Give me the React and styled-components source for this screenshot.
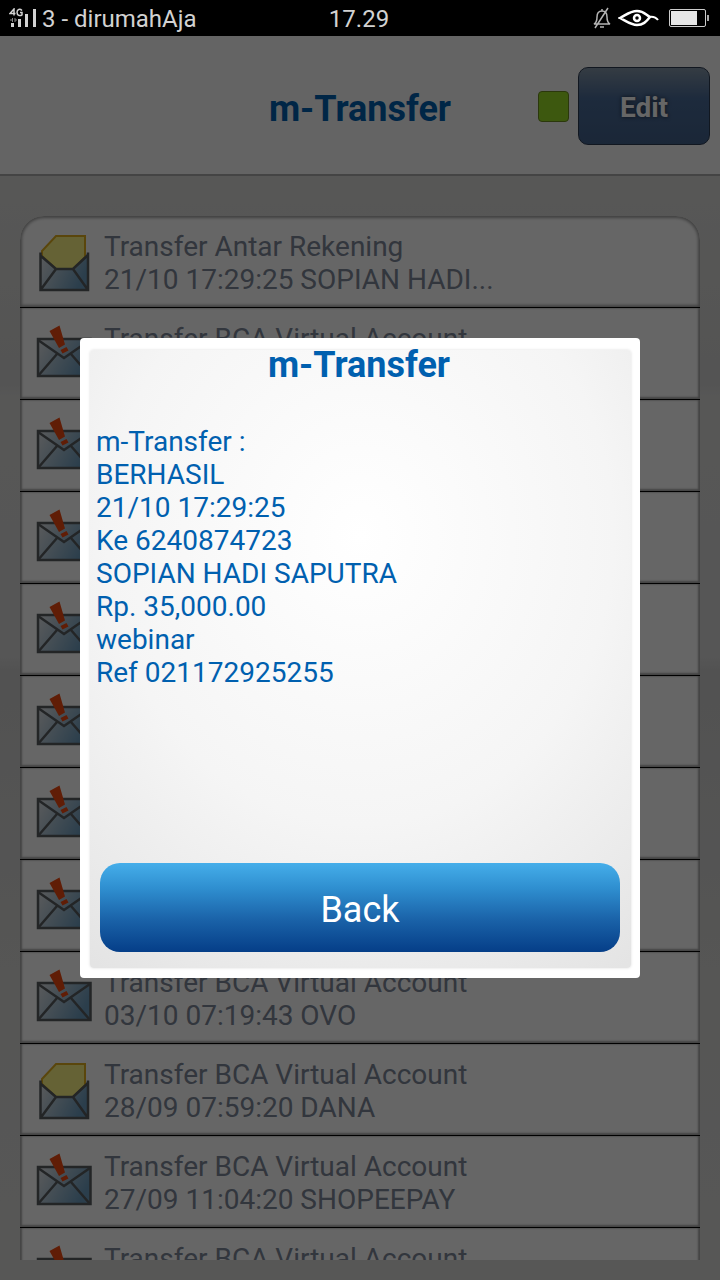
import React from "react";
import styled, { createGlobalStyle } from "styled-components";

const Global = createGlobalStyle`
  * { box-sizing: border-box; }
  body { margin: 0; font-family: Roboto, sans-serif; background: #000; }
  h1, h2, p, ul { margin: 0; padding: 0; }
`;

const Screen = styled.div`
  display: flex;
  flex-direction: column;
  height: 100vh;
  overflow: hidden;
`;

const StatusBar = styled.header`
  display: grid;
  grid-template-columns: 1fr auto 1fr;
  align-items: center;
  height: 36px;
  flex: none;
  padding: 0 11px 0 9px;
  background: #000;
  color: #d2d2d2;
  font-size: 24px;
  line-height: 36px;
`;

const StatusGroup = styled.div`
  display: flex;
  align-items: center;
  justify-content: ${(p) => (p.$end ? "flex-end" : "flex-start")};
  gap: 6px;
  white-space: nowrap;
`;

const StatusText = styled.span`
  padding-top: 2px;
  line-height: 34px;
`;

const Page = styled.div`
  position: relative;
  flex: 1;
  min-height: 0;
  display: flex;
  flex-direction: column;
  background: linear-gradient(#dfdfdc, #d6d6d4 20%, #d2d2d2 28%, #dadad8 29%, #d6d6d6 50%, #cdcdcd 51%, #d6d6d4 75%, #dadad8);
`;

const TitleBar = styled.div`
  display: grid;
  grid-template-columns: 1fr auto 1fr;
  align-items: center;
  flex: none;
  height: 140px;
  padding: 2px 10px 0;
  background: #fafafa;
  border-bottom: 2px solid #aaa;
`;

const Title = styled.h1`
  grid-column: 2;
  padding-top: 6px;
  color: #0060af;
  font-size: 36px;
  line-height: 42px;
  font-weight: 700;
  text-align: center;
`;

const Actions = styled.div`
  display: flex;
  align-items: center;
  justify-content: flex-end;
  gap: 9px;
`;

const Light = styled.span`
  width: 31px;
  height: 31px;
  border: 1px solid #6c8c1e;
  border-radius: 4px;
  background: #9add26;
`;

const EditButton = styled.button`
  width: 132px;
  height: 78px;
  padding: 2px 0 0;
  border: 1px solid #2c3b52;
  border-radius: 10px;
  background: linear-gradient(#8496a8, #4a6b98 40%, #43618b);
  color: #fff;
  font: 700 28px/33px Roboto, sans-serif;
  text-shadow: 0 0 4px #1a2638;
`;

const List = styled.ul`
  flex: 1;
  min-height: 0;
  margin: 40px 20px 20px;
  list-style: none;
  overflow: hidden;
  border-radius: 24px 24px 0 0;
`;

const Row = styled.li`
  display: flex;
  align-items: center;
  gap: 12px;
  height: 92px;
  padding: 0 16px;
  border-bottom: 1px solid #000;
  background: #fff;
  box-shadow: inset 0 -2px 2px #aaa, inset 2px 0 2px #aaa, inset -2px 0 2px #aaa;
  color: #7d8798;
  font-size: 28px;
  line-height: 33px;

  &:first-child {
    border-radius: 24px 24px 0 0;
    box-shadow: inset 0 0 3px 2px #a4a4a4;
  }
`;

const RowText = styled.div`
  padding-top: 2px;
`;

const RowIcon = styled.svg`
  flex: none;
  width: 56px;
  height: 60px;
`;

const Overlay = styled.div`
  position: absolute;
  inset: 0;
  display: flex;
  align-items: center;
  justify-content: center;
  background: rgba(0, 0, 0, 0.6);
`;

const Dialog = styled.section`
  display: flex;
  flex-direction: column;
  width: calc(100% - 160px);
  min-height: 640px;
  padding: 12px 9px 10px 10px;
  border-radius: 4px;
  background: #fff;
`;

const DialogBody = styled.div`
  flex: 1;
  display: flex;
  flex-direction: column;
  padding: 0 11px 16px 6px;
  border-radius: 4px;
  background: radial-gradient(ellipse 85% 85% at 50% 30%, #fff, #f5f5f5 55%, #e4e4e4);
  box-shadow: 0 0 3px #ddd;
  color: #0060af;
`;

const DialogTitle = styled.h2`
  margin-top: -6px;
  padding-left: 2px;
  font-size: 36px;
  line-height: 42px;
  font-weight: 700;
  text-align: center;
`;

const Message = styled.p`
  flex: 1;
  padding-top: 39px;
  font-size: 28px;
  line-height: 33px;
`;

const BackButton = styled.button`
  height: 89px;
  margin-left: 4px;
  padding: 4px 0 0;
  border: 0;
  border-radius: 20px;
  background: linear-gradient(#45aeea, #2f8fd0 28%, #1a62a8 64%, #053e88);
  color: #fff;
  font: 400 36px/42px Roboto, sans-serif;
`;

const SignalIcon = () => (
  <svg width="27" height="20" viewBox="0 0 27 20" fill="#d2d2d2" aria-hidden="true">
    <path d="M5 7.500V1L1 5.500h5.500" fill="none" stroke="#d2d2d2" strokeWidth="1.500" />
    <path d="M13 2.500C11 .500 8 1 8 4.300s3 4 5 2.500V4.600H11" fill="none" stroke="#d2d2d2" strokeWidth="1.500" />
    <path d="M1 12h2m3 0h2M3.500 10v4M6 10v4" stroke="#888" fill="none" />
    <path d="M2 15h3v4H2zM9 11h3v8H9zM16 6h3v13h-3zM24 1h3v18h-3z" />
  </svg>
);

const BellOffIcon = () => (
  <svg width="20" height="22" viewBox="0 0 20 22" fill="none" stroke="#b4b4b4" strokeWidth="1.500" aria-hidden="true">
    <path d="M2 17h16c-2-1-3-3-3-7 0-4-2-6-5-6s-5 2-5 6c0 4-1 6-3 7zM8 20h4M3 21 16 1M10 2v2" />
  </svg>
);

const EyeIcon = () => (
  <svg width="45" height="18" viewBox="0 0 45 18" fill="none" stroke="#fff" aria-hidden="true">
    <path d="M2 9C8 6 12 2 19 2s9 4 13 6c-4 5-7 8-13 8S8 12 2 9z" strokeWidth="2.500" />
    <path d="M30 8c5-1 8 0 10 3" strokeWidth="2" />
    <circle cx="19" cy="9" r="3" strokeWidth="2.500" />
  </svg>
);

const BatteryIcon = () => (
  <svg width="40" height="18" viewBox="0 0 40 18" aria-hidden="true">
    <rect x=".5" y=".5" width="36" height="17" rx="1.500" fill="none" stroke="#ccc" />
    <path d="M2 2h26v14H2z" fill="#e6e6e6" />
    <path d="M38 6h2v6h-2z" fill="#aaa" />
  </svg>
);

const EnvelopeGradient = ({ id }) => (
  <linearGradient id={id} x1="0" y1="0" x2="1" y2=".4">
    <stop offset="0" stopColor="#e2e4e6" />
    <stop offset="1" stopColor="#6c9cbe" />
  </linearGradient>
);

const OpenMail = ({ id }) => (
  <RowIcon viewBox="0 0 56 60" aria-hidden="true">
    <defs><EnvelopeGradient id={id} /></defs>
    <path d="M4.500 21v37h47.500V21L37 37H19z" fill={`url(#${id})`} />
    <path d="M6 19 20 4h29v21L37 37H20L6 24z" fill="#fcf686" stroke="#e0ae20" strokeWidth="2" />
    <path d="M4.500 20.500V58H52V20.500M5 24l15 13h17l15-14M4.500 58 20 37M52 58 37 37" fill="none" stroke="#585c60" strokeWidth="2.500" />
  </RowIcon>
);

const AlertMail = ({ id }) => (
  <RowIcon viewBox="0 0 56 60" aria-hidden="true">
    <defs><EnvelopeGradient id={id} /></defs>
    <path d="M2 15h52.500v37H2z" fill={`url(#${id})`} stroke="#585c60" strokeWidth="2.500" />
    <path d="m2 16 26 18 26-18M2 52l19-22M54 52 35 30" fill="none" stroke="#585c60" strokeWidth="2.500" />
    <path d="m13.500 7 10-5.500 5.500 19-6 3.500zM24.500 26l6-3 2 3.500-6 3z" fill="#f04a10" />
  </RowIcon>
);

const VA = "Transfer BCA Virtual Account";
const transfers = [
  { open: true, name: "Transfer Antar Rekening", detail: "21/10 17:29:25 SOPIAN HADI..." },
  { name: VA }, { name: VA }, { name: VA }, { name: VA }, { name: VA }, { name: VA }, { name: VA },
  { name: VA, detail: "03/10 07:19:43 OVO" },
  { open: true, name: VA, detail: "28/09 07:59:20 DANA" },
  { name: VA, detail: "27/09 11:04:20 SHOPEEPAY" },
  { name: VA },
];

const receipt = [
  "m-Transfer :", "BERHASIL", "21/10 17:29:25", "Ke 6240874723",
  "SOPIAN HADI SAPUTRA", "Rp. 35,000.00", "webinar", "Ref 021172925255",
];

export default function App() {
  return (
    <Screen>
      <Global />
      <StatusBar>
        <StatusGroup><SignalIcon /><StatusText>3 - dirumahAja</StatusText></StatusGroup>
        <StatusText>17.29</StatusText>
        <StatusGroup $end><BellOffIcon /><EyeIcon /><BatteryIcon /></StatusGroup>
      </StatusBar>
      <Page>
        <TitleBar>
          <Title>m-Transfer</Title>
          <Actions><Light /><EditButton type="button">Edit</EditButton></Actions>
        </TitleBar>
        <List>
          {transfers.map((t, i) => (
            <Row key={i}>
              {t.open ? <OpenMail id={`mail${i}`} /> : <AlertMail id={`mail${i}`} />}
              <RowText>{t.name}<br />{t.detail || "\u00a0"}</RowText>
            </Row>
          ))}
        </List>
        <Overlay>
          <Dialog role="dialog" aria-labelledby="dialog-title">
            <DialogBody>
              <DialogTitle id="dialog-title">m-Transfer</DialogTitle>
              <Message>
                {receipt.map((line) => <React.Fragment key={line}>{line}<br /></React.Fragment>)}
              </Message>
              <BackButton type="button">Back</BackButton>
            </DialogBody>
          </Dialog>
        </Overlay>
      </Page>
    </Screen>
  );
}
